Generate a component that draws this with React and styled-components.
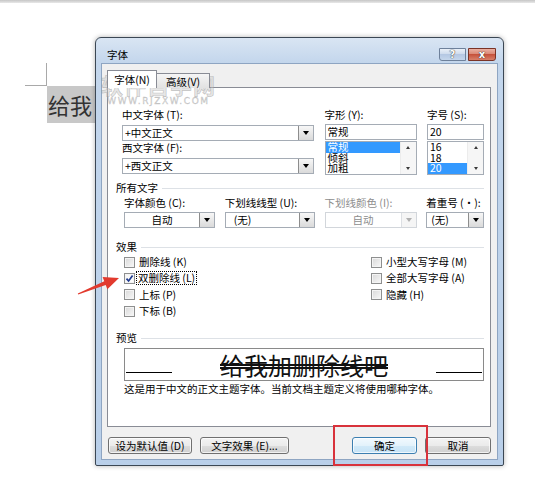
import React from "react";
import styled, { createGlobalStyle } from "styled-components";

const GlobalStyle = createGlobalStyle`
  html, body { margin: 0; padding: 0; background: #fff; }
  body { font-family: "Noto Sans CJK SC", "Noto Sans", sans-serif; }
  * { box-sizing: border-box; }
`;

const Page = styled.div`
  position: relative;
  width: 535px;
  height: 500px;
  overflow: hidden;
  background: #fff;
`;

const TopStrip = styled.div`
  height: 3px;
  background: linear-gradient(#c6c6c6, #e8e8e8);
`;

const Doc = styled.div`
  padding: 60px 0 0 25px;
`;

const MarginMark = styled.div`
  width: 22px;
  height: 23px;
  border-right: 1px solid #a9a9a9;
  border-bottom: 1px solid #a9a9a9;
`;

const Selected = styled.div`
  margin-left: 22px;
  width: 90px;
  height: 37px;
  padding-left: 1px;
  background: #c8c8c8;
  color: #333;
  font-size: 22px;
  line-height: 37px;
`;

const Dialog = styled.div`
  position: absolute;
  left: 95px;
  top: 37px;
  width: 409px;
  height: 429px;
  display: flex;
  flex-direction: column;
  padding: 0 5px 5px;
  border: 1px solid #3b4754;
  border-radius: 6px 6px 2px 2px;
  background: linear-gradient(#d9e5f3 0, #c3d6ec 25px, #b9cfe9 100%);
  box-shadow: 0 0 5px rgba(0, 0, 0, 0.3);
`;

const TitleBar = styled.div`
  height: 25px;
  display: flex;
  align-items: flex-start;
  justify-content: space-between;
  padding-left: 6px;
`;

const Title = styled.div`
  margin-top: 10px;
  font-size: 10.5px;
  line-height: 14px;
  color: #000;
`;

const CaptionButtons = styled.div`
  display: flex;
  gap: 2px;
  margin-top: 10px;
  margin-right: 2px;
`;

const CaptionButton = styled.div`
  width: ${(p) => (p.$close ? 28 : 27)}px;
  height: 13px;
  display: flex;
  align-items: center;
  justify-content: center;
  border: 1px solid ${(p) => (p.$close ? "#7a3326" : "#6e819b")};
  border-radius: ${(p) => (p.$close ? "0 0 3px 0" : "0 0 0 3px")};
  background: ${(p) =>
    p.$close
      ? "linear-gradient(#eab0a2, #d98471 50%, #c6523c 50%, #d8806a)"
      : "linear-gradient(#eaf0f8, #cbd9ec 50%, #b5c8e3 50%, #c5d6ec)"};
  color: #fff;
  font-family: "DejaVu Sans", sans-serif;
  font-weight: bold;
  font-size: ${(p) => (p.$close ? 10 : 10)}px;
  line-height: 1;
  text-shadow: 0 0 1px #333, 0 0 1px #333;
`;

const Client = styled.div`
  flex: 1;
  display: flex;
  flex-direction: column;
  padding: 6px 6px 0 5px;
  background: #f0f0f0;
  border: 1px solid #8ea5c2;
`;

const Tabs = styled.div`
  position: relative;
  z-index: 1;
  display: flex;
  align-items: flex-end;
  height: 18px;
  margin-bottom: -1px;
`;

const Tab = styled.div`
  width: ${(p) => p.$w}px;
  height: ${(p) => (p.$active ? 18 : 15)}px;
  display: flex;
  align-items: center;
  justify-content: center;
  border: 1px solid #898c95;
  border-bottom: none;
  border-left-width: ${(p) => (p.$active ? 1 : 0)}px;
  background: ${(p) => (p.$active ? "#fff" : "linear-gradient(#f5f5f5, #e2e2e2)")};
  font-size: 10.5px;
  color: #000;
`;

const Panel = styled.div`
  height: 340px;
  padding: 20px 6px 0 8px;
  background: #fff;
  border: 1px solid #898c95;
`;

const TopGrid = styled.div`
  display: grid;
  grid-template-columns: 192px 92px 57px;
  column-gap: 10.5px;
  margin-left: 6px;
`;

const AttrGrid = styled.div`
  display: grid;
  grid-template-columns: 91px 90px 92px 58px;
  column-gap: 9.75px;
  margin-left: 8px;
`;

const Stack = styled.div`
  display: flex;
  flex-direction: column;
`;

const Label = styled.div`
  height: 14px;
  margin-top: ${(p) => p.$mt || 0}px;
  font-size: 10.5px;
  line-height: 14px;
  white-space: nowrap;
  color: ${(p) => (p.$disabled ? "#8d8d8d" : "#000")};
`;

const Combo = styled.div`
  display: flex;
  height: 16px;
  margin-top: ${(p) => p.$mt || 0}px;
  background: #fff;
  border: 1px solid ${(p) => (p.$disabled ? "#d2d6db" : "#a5acb5")};
  font-size: 10.5px;
  line-height: 14px;
  color: ${(p) => (p.$disabled ? "#8d8d8d" : "#000")};
`;

const ComboText = styled.div`
  flex: 1;
  padding-left: ${(p) => p.$indent ?? 2}px;
  text-align: ${(p) => p.$align || "left"};
  white-space: nowrap;
  overflow: hidden;
`;

const DropButton = styled.div`
  width: 15px;
  display: flex;
  align-items: center;
  justify-content: center;
  border-left: 1px solid ${(p) => (p.$disabled ? "#dcdfe3" : "#8d8d8d")};
  background: ${(p) => (p.$disabled ? "#f5f5f5" : "linear-gradient(#f7f7f7, #dadada)")};

  &::after {
    content: "";
    border-left: 3px solid transparent;
    border-right: 3px solid transparent;
    border-top: 4px solid ${(p) => (p.$disabled ? "#b0b0b0" : "#000")};
  }
`;

const ListBox = styled.div`
  display: flex;
  height: 34px;
  margin-top: 1px;
  background: #fff;
  border: 1px solid #a5acb5;
`;

const Items = styled.div`
  flex: 1;
  display: flex;
  flex-direction: column;
`;

const Item = styled.div`
  height: 10.67px;
  padding-left: 2px;
  font-size: 10.5px;
  line-height: 10.67px;
  white-space: nowrap;
  background: ${(p) => (p.$selected ? "#3399ff" : "transparent")};
  color: ${(p) => (p.$selected ? "#fff" : "#000")};
`;

const ScrollTrack = styled.div`
  width: 16px;
  display: flex;
  flex-direction: column;
  align-items: center;
  justify-content: space-between;
  padding: 4px 0;
  background: #f6f6f6;
  border-left: 1px solid #ececec;
`;

const ScrollArrow = styled.div`
  border-left: 2.5px solid transparent;
  border-right: 2.5px solid transparent;
  border-${(p) => (p.$up ? "bottom" : "top")}: 3px solid #3a3a3a;
`;

const SectionHeader = styled.div`
  display: flex;
  align-items: center;
  height: 14px;
  margin-top: ${(p) => p.$mt || 0}px;
  font-size: 10.5px;
  line-height: 14px;
  color: #000;

  &::after {
    content: "";
    flex: 1;
    height: 1px;
    margin-left: 4px;
    background: #dde1e6;
  }
`;

const EffectsGrid = styled.div`
  display: grid;
  grid-template-columns: 247px 1fr;
  margin-left: 8px;
`;

const CheckRow = styled.div`
  display: flex;
  align-items: center;
  height: 16.3px;
  font-size: 10.5px;
  color: #000;
  white-space: nowrap;
`;

const Box = styled.div`
  width: 11px;
  height: 11px;
  display: flex;
  align-items: center;
  justify-content: center;
  border: 1px solid #8e8f8f;
  background: ${(p) =>
    p.$checked ? "linear-gradient(135deg, #f4f4f4, #ffffff)" : "linear-gradient(135deg, #d8d8d8, #f8f8f8)"};
  box-shadow: inset 0 0 0 1px #f4f4f4;
`;

const CheckText = styled.span`
  margin-left: ${(p) => (p.$focus ? 2 : 3)}px;
  padding: 0 1px;
  line-height: 12px;
  outline: ${(p) => (p.$focus ? "1px dotted #000" : "none")};
`;

const PreviewBox = styled.div`
  display: grid;
  grid-template-columns: 46px 1fr 46px;
  height: 33px;
  width: 360px;
  margin: 3px 0 0 8px;
  padding: 0 1px;
  border: 1px solid #8a8a8a;
  background: #fff;
`;

const BaseLine = styled.div`
  height: 1px;
  margin-top: 23px;
  background: #000;
`;

const PreviewText = styled.div`
  text-align: center;
  font-size: 24px;
  line-height: 31px;
  color: #111;
  text-decoration: line-through double #111;
`;

const Note = styled.div`
  margin: 1px 0 0 8px;
  font-size: 10.5px;
  line-height: 14px;
  color: #000;
  white-space: nowrap;
`;

const ButtonRow = styled.div`
  display: flex;
  justify-content: space-between;
  margin-top: 10px;
  padding-left: 1px;
`;

const ButtonGroup = styled.div`
  display: flex;
  gap: 8px;
`;

const Button = styled.div`
  width: ${(p) => p.$w}px;
  height: 17px;
  display: flex;
  align-items: center;
  justify-content: center;
  border: 1px solid ${(p) => (p.$default ? "#3c7fb1" : "#707070")};
  border-radius: 3px;
  background: ${(p) =>
    p.$default
      ? "linear-gradient(#f2f9fe, #e3f2fb 50%, #d2eaf9 50%, #c6e3f6)"
      : "linear-gradient(#f3f3f3, #ebebeb 50%, #dddddd 50%, #d0d0d0)"};
  box-shadow: inset 0 0 0 1px rgba(255, 255, 255, 0.7);
  font-size: 10.5px;
  color: #000;
  white-space: nowrap;
`;

const Watermark = styled.div`
  position: absolute;
  left: 5px;
  top: 34px;
  display: flex;
  flex-direction: column;
  align-items: center;
  pointer-events: none;
`;

const WatermarkTitle = styled.div`
  font-size: 22px;
  font-weight: bold;
  line-height: 24px;
  letter-spacing: 1px;
  color: rgba(200, 200, 200, 0.45);
  -webkit-text-stroke: 0.6px rgba(150, 150, 150, 0.55);
`;

const WatermarkUrl = styled.div`
  font-family: "DejaVu Sans", sans-serif;
  font-size: 9px;
  line-height: 10px;
  letter-spacing: 1.6px;
  color: rgba(200, 200, 200, 0.6);
  -webkit-text-stroke: 0.4px rgba(150, 150, 150, 0.5);
`;

const Highlight = styled.div`
  position: absolute;
  left: 333px;
  top: 425px;
  width: 95px;
  height: 41px;
  border: 2px solid #d8323b;
  pointer-events: none;
`;

const Arrow = styled.svg`
  position: absolute;
  left: 70px;
  top: 268px;
`;

function ComboBox({ text, align, indent, disabled, mt }) {
  return (
    <Combo $disabled={disabled} $mt={mt}>
      <ComboText $align={align} $indent={indent}>
        {text}
      </ComboText>
      <DropButton $disabled={disabled} />
    </Combo>
  );
}

function List({ items, selected }) {
  return (
    <ListBox>
      <Items>
        {items.map((it) => (
          <Item key={it} $selected={it === selected}>
            {it}
          </Item>
        ))}
      </Items>
      <ScrollTrack>
        <ScrollArrow $up />
        <ScrollArrow />
      </ScrollTrack>
    </ListBox>
  );
}

function Check({ label, checked, focus }) {
  return (
    <CheckRow>
      <Box $checked={checked}>
        {checked && (
          <svg width="9" height="9" viewBox="0 0 9 9">
            <path d="M1.5 4.6 L3.6 7 L7.6 1.6" fill="none" stroke="#1e3a8f" strokeWidth="1.7" />
          </svg>
        )}
      </Box>
      <CheckText $focus={focus}>{label}</CheckText>
    </CheckRow>
  );
}

export default function App() {
  return (
    <Page>
      <GlobalStyle />
      <TopStrip />
      <Doc>
        <MarginMark />
        <Selected>给我</Selected>
      </Doc>

      <Dialog>
        <TitleBar>
          <Title>字体</Title>
          <CaptionButtons>
            <CaptionButton>?</CaptionButton>
            <CaptionButton $close>x</CaptionButton>
          </CaptionButtons>
        </TitleBar>
        <Client>
          <Tabs>
            <Tab $active $w={50}>字体(N)</Tab>
            <Tab $w={53}>高级(V)</Tab>
          </Tabs>
          <Panel>
            <TopGrid>
              <Stack>
                <Label>中文字体 (T):</Label>
                <ComboBox text="+中文正文" mt={3} />
                <Label>西文字体 (F):</Label>
                <ComboBox text="+西文正文" mt={3} />
              </Stack>
              <Stack>
                <Label>字形 (Y):</Label>
                <Combo $mt={2}>
                  <ComboText>常规</ComboText>
                </Combo>
                <List items={["常规", "倾斜", "加粗"]} selected="常规" />
              </Stack>
              <Stack>
                <Label>字号 (S):</Label>
                <Combo $mt={2}>
                  <ComboText>20</ComboText>
                </Combo>
                <List items={["16", "18", "20"]} selected="20" />
              </Stack>
            </TopGrid>

            <SectionHeader $mt={6}>所有文字</SectionHeader>
            <AttrGrid>
              <Stack>
                <Label $mt={1}>字体颜色 (C):</Label>
                <ComboBox text="自动" align="center" indent={0} mt={2} />
              </Stack>
              <Stack>
                <Label $mt={1}>下划线线型 (U):</Label>
                <ComboBox text="(无)" indent={8} mt={2} />
              </Stack>
              <Stack>
                <Label $mt={1} $disabled>
                  下划线颜色 (I):
                </Label>
                <ComboBox text="自动" align="center" indent={0} mt={2} disabled />
              </Stack>
              <Stack>
                <Label $mt={1}>着重号 (·):</Label>
                <ComboBox text="(无)" indent={4} mt={2} />
              </Stack>
            </AttrGrid>

            <SectionHeader $mt={12}>效果</SectionHeader>
            <EffectsGrid>
              <Stack>
                <Check label="删除线 (K)" />
                <Check label="双删除线 (L)" checked focus />
                <Check label="上标 (P)" />
                <Check label="下标 (B)" />
              </Stack>
              <Stack>
                <Check label="小型大写字母 (M)" />
                <Check label="全部大写字母 (A)" />
                <Check label="隐藏 (H)" />
              </Stack>
            </EffectsGrid>

            <SectionHeader $mt={12}>预览</SectionHeader>
            <PreviewBox>
              <BaseLine />
              <PreviewText>给我加删除线吧</PreviewText>
              <BaseLine />
            </PreviewBox>
            <Note>这是用于中文的正文主题字体。当前文档主题定义将使用哪种字体。</Note>
          </Panel>

          <ButtonRow>
            <ButtonGroup>
              <Button $w={84}>设为默认值 (D)</Button>
              <Button $w={89}>文字效果 (E)...</Button>
            </ButtonGroup>
            <ButtonGroup>
              <Button $w={65} $default>
                确定
              </Button>
              <Button $w={66}>取消</Button>
            </ButtonGroup>
          </ButtonRow>
        </Client>

        <Watermark>
          <WatermarkTitle>软件自学网</WatermarkTitle>
          <WatermarkUrl>WWW.RJZXW.COM</WatermarkUrl>
        </Watermark>
      </Dialog>

      <Highlight />
      <Arrow width="55" height="35" viewBox="0 0 55 35">
        <polygon
          points="7.8,25.5 34.3,13.3 32.6,9.1 49,10 37.4,21.3 35.7,17.1 8.2,26.5"
          fill="#e23a2e"
        />
      </Arrow>
    </Page>
  );
}
